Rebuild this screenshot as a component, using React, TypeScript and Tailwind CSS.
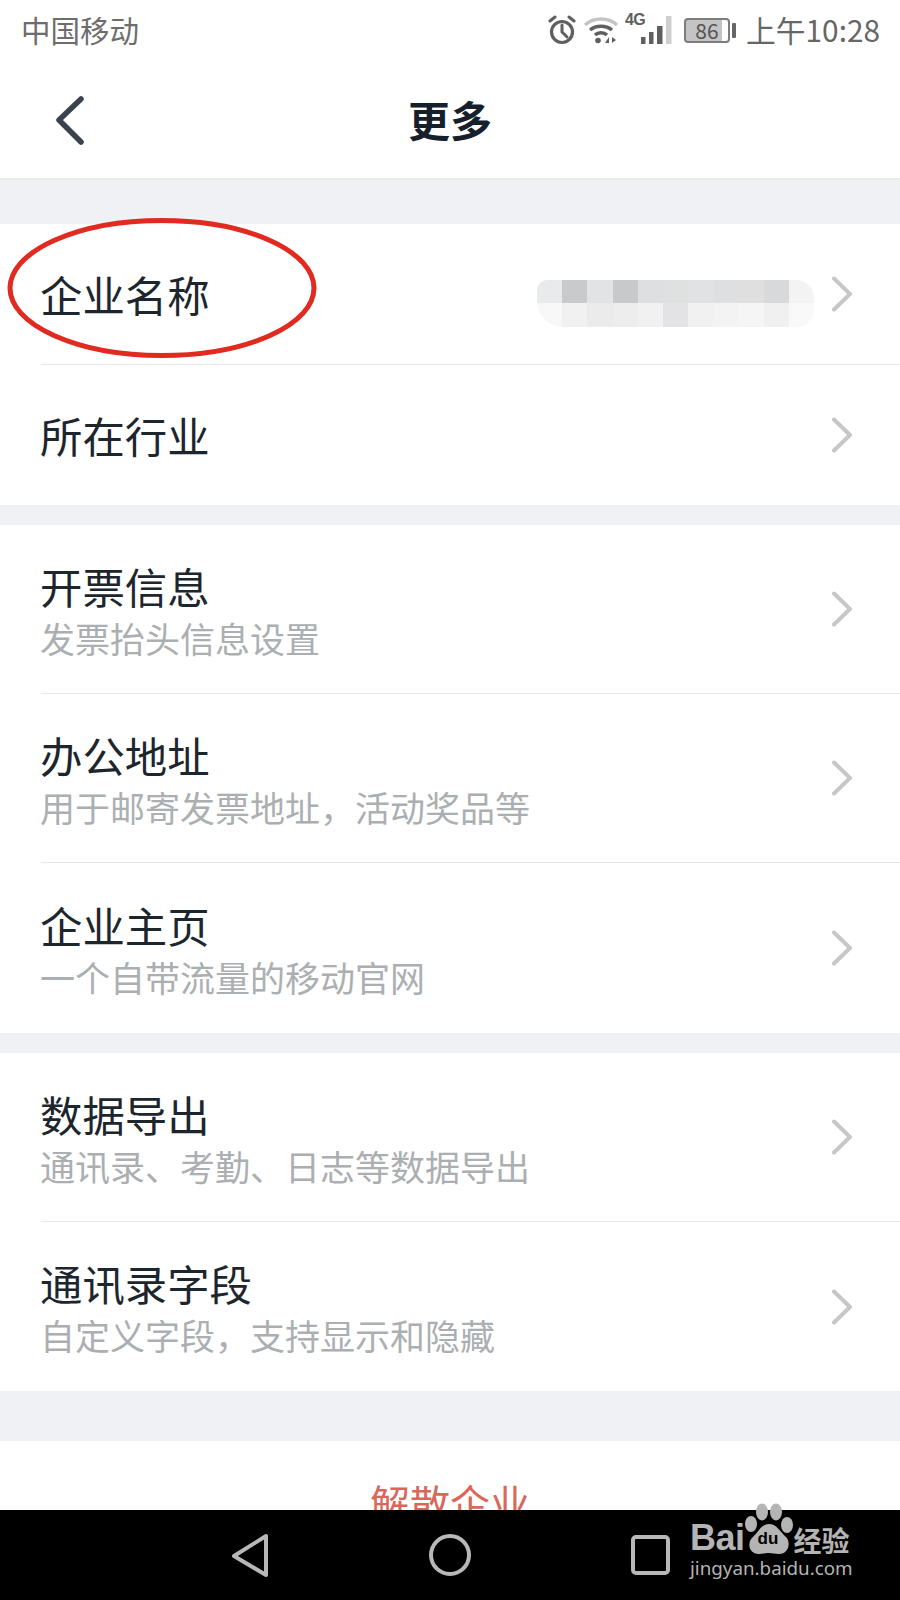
const FONT = "font-['Noto_Sans_CJK_SC','Noto_Sans',sans-serif]";

function Chevron() {
  return (
    <svg width="22" height="36" viewBox="0 0 22 36" fill="none" className="shrink-0">
      <path d="M3 2.5l16 15.500L3 33.500" stroke="#c6c7c9" strokeWidth="4" strokeLinecap="round" strokeLinejoin="round" />
    </svg>
  );
}

function Row({ title, sub, last, height }: { title: string; sub?: string; last?: boolean; height: string }) {
  return (
    <div className={`ml-[41px] flex items-center pr-[47px] ${height} ${last ? "" : "border-b border-[#e6e7e9]"}`}>
      <div className={`-ml-[1px] flex-1 ${sub ? "pt-[2px]" : ""}`}>
        <div className="text-[42.4px] leading-[50px] text-[#1d252d]">{title}</div>
        {sub && <div className="mt-[5px] text-[35px] leading-[44px] text-[#abafb2]">{sub}</div>}
      </div>
      <Chevron />
    </div>
  );
}

function Blurred() {
  const top = ["bg-[#e9eaeb]", "bg-[#c9cacc]", "bg-[#e2e3e4]", "bg-[#c8c9cb]", "bg-[#dedfe0]", "bg-[#dfe0e0]", "bg-[#e1e2e3]", "bg-[#dedfe0]", "bg-[#dfdfe0]", "bg-[#d8d9da]", "bg-[#f3f3f4]"];
  const bottom = ["bg-[#f8f8f9]", "bg-[#f1f1f2]", "bg-[#ebebec]", "bg-[#ededee]", "bg-[#f1f1f2]", "bg-[#e3e3e5]", "bg-[#f1f1f2]", "bg-[#f3f3f4]", "bg-[#f5f5f6]", "bg-[#f0f0f1]", "bg-[#f9f9f9]"];
  return (
    <div className="mr-[17px] mt-[18px] w-[277px] shrink-0 overflow-hidden rounded-bl-[26px] rounded-br-[18px] rounded-tl-[10px] rounded-tr-[18px]">
      <div className="flex h-[23px]">
        {top.map((c, i) => (
          <div key={i} className={`flex-1 ${c}`} />
        ))}
      </div>
      <div className="flex h-[24px]">
        {bottom.map((c, i) => (
          <div key={i} className={`flex-1 ${c}`} />
        ))}
      </div>
    </div>
  );
}

function StatusIcons() {
  return (
    <div className="flex items-center text-[#666]">
      <svg width="30" height="30" viewBox="0 0 30 30" fill="none" stroke="#5f5f5f">
        <circle cx="15" cy="17" r="10.5" strokeWidth="3.2" />
        <path d="M15 10v7l5 5" strokeWidth="3" strokeLinecap="round" />
        <path d="M3 6l5-4M27 6l-5-4" strokeWidth="3" strokeLinecap="round" />
      </svg>
      <svg width="36" height="28" viewBox="0 0 36 28" fill="none" className="ml-[6px]">
        <path d="M2 9C11 1 25 1 34 9" stroke="#c4c4c4" strokeWidth="3.5" />
        <path d="M7 14c6-5 16-5 22 0" stroke="#5f5f5f" strokeWidth="3.5" />
        <path d="M12 19c3-3 9-3 12 0" stroke="#5f5f5f" strokeWidth="3.5" />
        <circle cx="15" cy="24.500" r="2.800" fill="#5f5f5f" />
        <path d="M22 27l4-6v6zM29 21l4 3-4 3z" fill="#5f5f5f" />
      </svg>
      <div className="relative ml-[6px] h-[30px] w-[47px]">
        <span className="absolute left-0 top-[-4px] font-['Liberation_Sans',sans-serif] text-[16px] font-bold leading-[18px] tracking-[-0.5px] text-[#5f5f5f]">4G</span>
        <svg width="32" height="28" viewBox="0 0 32 28" className="absolute right-0 top-[1px]">
          <rect x="1" y="21" width="4.500" height="7" fill="#5f5f5f" />
          <rect x="9" y="16" width="4.500" height="12" fill="#5f5f5f" />
          <rect x="17" y="10" width="5.500" height="18" fill="#5f5f5f" />
          <rect x="26" y="0" width="5.500" height="28" fill="#cfcfcf" />
        </svg>
      </div>
      <div className="ml-[12px] flex h-[25px] w-[46px] items-center justify-center rounded-[4px] border-2 border-[#7d7d7d] bg-[linear-gradient(90deg,#c4c4c4_86%,#fff_86%)] text-[21px] leading-none text-[#555]">
        86
      </div>
      <div className="ml-[2px] h-[15px] w-[4px] rounded-[1px] bg-[#666]" />
    </div>
  );
}

function BaiduMark() {
  return (
    <div className="absolute left-[690px] top-[1503px] w-[164px]">
      <div className="flex h-[52px] items-end">
        <span className="font-['Liberation_Sans',sans-serif] text-[36px] font-bold leading-[34px] tracking-[-0.5px] text-[#b4b4b4]">Bai</span>
        <div className="relative h-[52px] w-[48px] shrink-0">
          <svg width="48" height="52" viewBox="0 0 48 52" fill="#b4b4b4">
            <ellipse cx="17" cy="9" rx="6" ry="8.500" />
            <ellipse cx="31" cy="9" rx="6" ry="8.500" />
            <ellipse cx="6" cy="21" rx="6" ry="8" />
            <ellipse cx="42" cy="22" rx="6" ry="8" />
            <path d="M24 21c8 0 11 8 17 13 5 5 3 17-7 17-4 0-7-1-10-1s-6 1-10 1C4 51 2 40 7 35c6-5 9-14 17-14z" />
          </svg>
          <span className="absolute left-[13px] top-[27px] font-['Liberation_Sans',sans-serif] text-[17px] font-bold leading-[17px] text-[#000]">du</span>
        </div>
        <span className={`${FONT} ml-[1px] whitespace-nowrap text-[28px] font-bold leading-[30px] text-[#b4b4b4]`}>经验</span>
      </div>
      <div className="mt-[1px] whitespace-nowrap font-['Noto_Sans',sans-serif] text-[18.800px] leading-[24px] text-[#b4b4b4]">jingyan.baidu.com</div>
    </div>
  );
}

export default function App() {
  return (
    <div className={`${FONT} relative flex h-[1600px] w-[900px] flex-col overflow-hidden bg-white`}>
      {/* status bar */}
      <div className="flex h-[60px] items-center justify-between pl-[21px] pr-[20px]">
        <span className="text-[29.500px] leading-none text-[#6d6d6d]">中国移动</span>
        <div className="flex items-center">
          <StatusIcons />
          <span className="ml-[10px] text-[29.800px] leading-none text-[#666]">上午10:28</span>
        </div>
      </div>

      {/* title */}
      <div className="relative flex h-[120px] items-center justify-center border-b-2 border-[#e8e9ea]">
        <svg width="30" height="50" viewBox="0 0 30 50" fill="none" className="absolute left-[55px] top-[36px]">
          <path d="M26 3L4 24l22 22" stroke="#3a424b" strokeWidth="5.500" strokeLinecap="round" strokeLinejoin="round" />
        </svg>
        <span className="text-[42px] font-bold leading-none text-[#16202a]">更多</span>
      </div>

      <div className="h-[44px] bg-[#f0f1f4]" />

      <div className="ml-[41px] flex h-[141px] items-center border-b border-[#e6e7e9] pr-[47px]">
        <div className="-ml-[1px] flex-1 text-[42.400px] leading-[50px] text-[#1d252d]">企业名称</div>
        <Blurred />
        <Chevron />
      </div>
      <Row title="所在行业" height="h-[140px]" last />

      <div className="h-[20px] bg-[#f0f1f4]" />

      <Row title="开票信息" sub="发票抬头信息设置" height="h-[169px]" />
      <Row title="办公地址" sub="用于邮寄发票地址，活动奖品等" height="h-[169px]" />
      <Row title="企业主页" sub="一个自带流量的移动官网" height="h-[170px]" last />

      <div className="h-[20px] bg-[#f0f1f4]" />

      <Row title="数据导出" sub="通讯录、考勤、日志等数据导出" height="h-[169px]" />
      <Row title="通讯录字段" sub="自定义字段，支持显示和隐藏" height="h-[169px]" last />

      <div className="h-[50px] bg-[#f0f1f4]" />

      <div className="h-[69px] overflow-hidden pt-[36px] text-center text-[40px] leading-[50px] text-[#d9675a]">解散企业</div>

      {/* nav bar */}
      <div className="flex h-[90px] items-center bg-black">
        <svg width="900" height="90" viewBox="0 0 900 90" fill="none" stroke="#b8b8b8" strokeWidth="4">
          <path d="M266 26v39L234 46z" strokeLinejoin="round" />
          <circle cx="450" cy="45" r="19" />
          <rect x="633" y="27" width="35" height="36" rx="3" />
        </svg>
      </div>

      {/* red hand drawn circle */}
      <svg width="340" height="160" viewBox="0 0 340 160" fill="none" className="absolute left-0 top-[210px]">
        <ellipse cx="162" cy="78" rx="152" ry="67.500" stroke="#e12a20" strokeWidth="5" />
      </svg>

      <BaiduMark />
    </div>
  );
}
